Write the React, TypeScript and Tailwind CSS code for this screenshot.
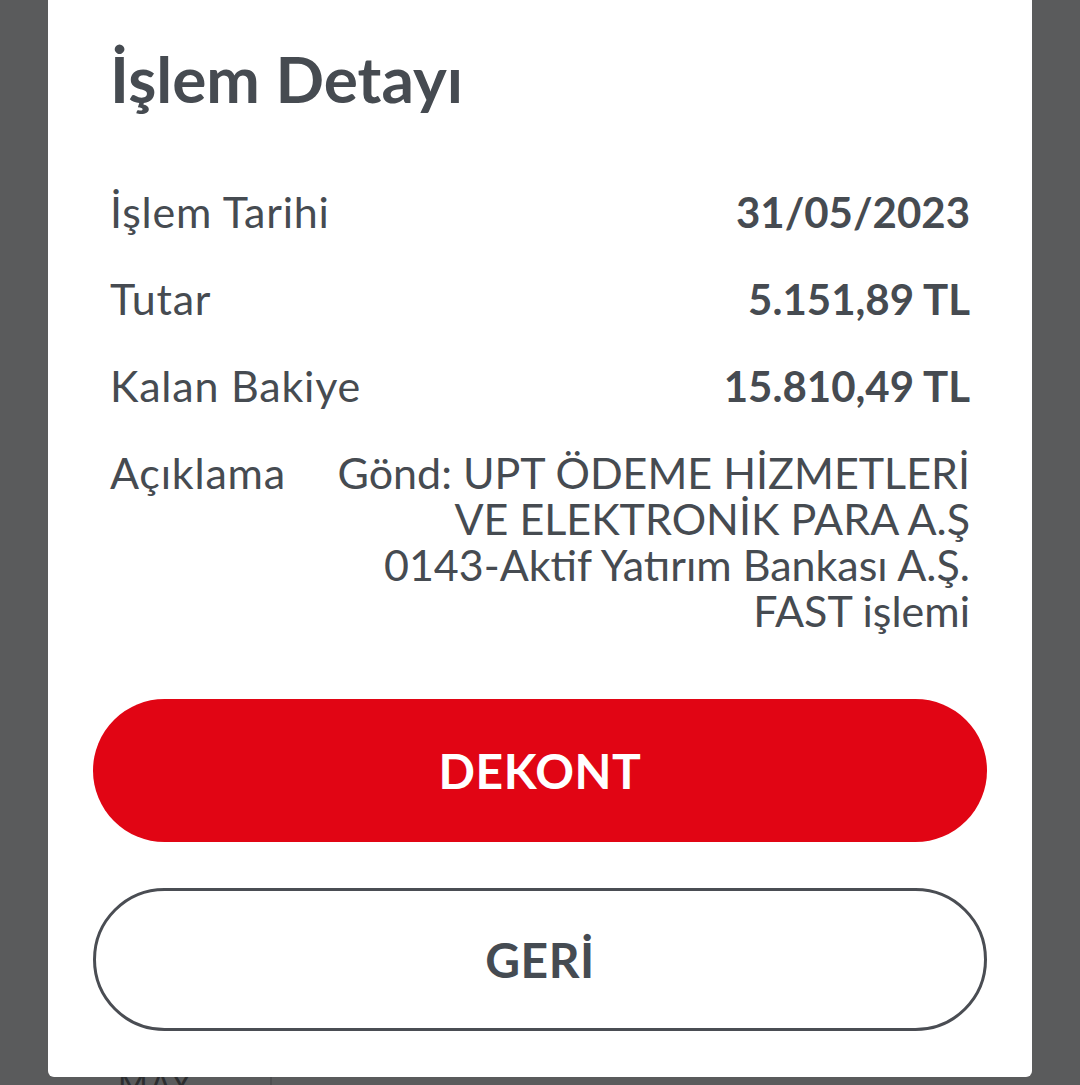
import React from "react";

const rows = [
  { label: "İşlem Tarihi", value: "31/05/2023" },
  { label: "Tutar", value: "5.151,89 TL" },
  { label: "Kalan Bakiye", value: "15.810,49 TL" },
];

const desc = [
  "Gönd: UPT ÖDEME HİZMETLERİ",
  "VE ELEKTRONİK PARA A.Ş",
  "0143-Aktif Yatırım Bankası A.Ş.",
  "FAST işlemi",
];

export default function App() {
  return (
    <div
      className="relative h-[1085px] w-[1080px] overflow-hidden bg-[#5a5b5c] flex flex-col justify-end"
      style={{ fontFamily: "Lato, 'Open Sans', sans-serif" }}
    >
      <div className="h-[8px] flex items-start overflow-hidden">
        <div className="w-[270px] pl-[118px] text-[32px] leading-[30px] text-[#2c2d2f] tracking-[2px] -mt-[8px]">
          MAY
        </div>
        <div className="w-[2px] h-full bg-[#4e4f51]" />
      </div>

      <div className="absolute left-[48px] top-0 w-[984px] h-[1077px] bg-white rounded-b-[6px] pt-[47px] text-[#464b51]">
        <h1 className="px-[62px] text-[64px] leading-[64px] font-bold">İşlem Detayı</h1>

        <div className="mt-[78px] px-[62px] flex flex-col gap-[41px]">
          {rows.map((r) => (
            <div key={r.label} className="flex justify-between text-[43px] leading-[46px]">
              <span className="tracking-[0.8px]">{r.label}</span>
              <span className="font-bold text-[42px]">{r.value}</span>
            </div>
          ))}
          <div className="flex justify-between text-[43px] leading-[46px]">
            <span className="tracking-[0.8px]">Açıklama</span>
            <div className="flex flex-col items-end text-right">
              {desc.map((d) => (
                <span key={d}>{d}</span>
              ))}
            </div>
          </div>
        </div>

        <div className="mt-[65px] px-[45px] flex flex-col gap-[46px]">
          <button className="h-[143px] w-full rounded-full bg-[#e10514] text-white text-[48px] font-bold tracking-[0.5px]">
            DEKONT
          </button>
          <button className="h-[143px] w-full rounded-full border-[3px] border-[#4a4d53] bg-white text-[#454b52] text-[48px] font-bold tracking-[0.5px]">
            GERİ
          </button>
        </div>
      </div>
    </div>
  );
}
